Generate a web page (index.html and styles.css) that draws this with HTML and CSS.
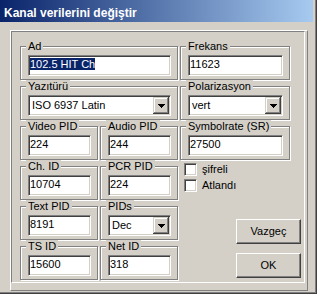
FILE: index.html
```html
<!DOCTYPE html>
<html lang="tr">
<head>
    <meta charset="UTF-8">
    <title>Kanal verilerini değiştir</title>
    <link rel="stylesheet" href="styles.css">
</head>
<body>
    <div class="window">
        <div class="titlebar">Kanal verilerini değiştir</div>
        <div class="frame">
            <div class="panel">
                <div class="grid">
                    <div class="group c12">
                        <span class="caption">Ad</span>
                        <div class="edit"><span class="sel">102.5 HIT Ch</span></div>
                    </div>
                    <div class="group c3">
                        <span class="caption">Frekans</span>
                        <div class="edit">11623</div>
                    </div>

                    <div class="group c12">
                        <span class="caption">Yazıtürü</span>
                        <div class="combo"><span class="value">ISO 6937 Latin</span><span class="drop"><svg width="7" height="4"><path d="M0 0h7v1h-1v1h-1v1h-1v1h-1v-1h-1v-1h-1v-1h-1z"/></svg></span></div>
                    </div>
                    <div class="group c3">
                        <span class="caption">Polarizasyon</span>
                        <div class="combo"><span class="value">vert</span><span class="drop"><svg width="7" height="4"><path d="M0 0h7v1h-1v1h-1v1h-1v1h-1v-1h-1v-1h-1v-1h-1z"/></svg></span></div>
                    </div>

                    <div class="group c1">
                        <span class="caption">Video PID</span>
                        <div class="edit">224</div>
                    </div>
                    <div class="group c2">
                        <span class="caption">Audio PID</span>
                        <div class="edit">244</div>
                    </div>
                    <div class="group c3">
                        <span class="caption">Symbolrate (SR)</span>
                        <div class="edit">27500</div>
                    </div>

                    <div class="side">
                        <label class="check"><span class="box"></span>şifreli</label>
                        <label class="check"><span class="box"></span>Atlandı</label>
                        <div class="buttons">
                            <div class="btn">Vazgeç</div>
                            <div class="btn">OK</div>
                        </div>
                    </div>

                    <div class="group c1">
                        <span class="caption">Ch. ID</span>
                        <div class="edit">10704</div>
                    </div>
                    <div class="group c2">
                        <span class="caption">PCR PID</span>
                        <div class="edit">224</div>
                    </div>

                    <div class="group c1">
                        <span class="caption">Text PID</span>
                        <div class="edit">8191</div>
                    </div>
                    <div class="group c2">
                        <span class="caption">PIDs</span>
                        <div class="combo"><span class="value">Dec</span><span class="drop"><svg width="7" height="4"><path d="M0 0h7v1h-1v1h-1v1h-1v1h-1v-1h-1v-1h-1v-1h-1z"/></svg></span></div>
                    </div>

                    <div class="group c1">
                        <span class="caption">TS ID</span>
                        <div class="edit">15600</div>
                    </div>
                    <div class="group c2">
                        <span class="caption">Net ID</span>
                        <div class="edit">318</div>
                    </div>
                </div>
            </div>
        </div>
    </div>
</body>
</html>
```

FILE: styles.css
```css
* {
    box-sizing: border-box;
    margin: 0;
    padding: 0;
}

body {
    font-family: "Liberation Sans", Arial, sans-serif;
    font-size: 11px;
    color: #000;
    background: #D4D0C8;
}

.window {
    width: 317px;
    height: 294px;
    background: #D4D0C8;
    box-shadow: inset -1px -1px #404040, inset -2px -2px #808080;
}

.titlebar {
    width: 313px;
    height: 22px;
    padding: 4px 0 0 4px;
    line-height: 18px;
    font-size: 12px;
    font-weight: bold;
    color: #fff;
    white-space: nowrap;
    background: linear-gradient(to right, #0A246A, #A6CAF0);
}

/* raised outer frame + sunken panel inside it */
.frame {
    width: 298px;
    margin: 8px 0 0 10px;
    padding: 0 2px 7px 0;
    border: 1px solid;
    border-color: #fff #808080 #808080 #fff;
}

.panel {
    padding: 14px 3px 2px 8px;
    border: 1px solid;
    border-color: #808080 #fff #fff #808080;
}

.grid {
    display: grid;
    grid-template-columns: 78px 78px 110px 9px;
    grid-template-rows: repeat(6, 34px);
    column-gap: 2px;
    row-gap: 6px;
}

.c1 { grid-column: 1; }
.c2 { grid-column: 2; }
.c3 { grid-column: 3; }
.c12 { grid-column: 1 / 3; }

/* etched group box */
.group {
    border: 1px solid #808080;
    box-shadow: inset 1px 1px #fff, 1px 1px #fff;
    padding: 0 6px 0 7px;
}

.caption {
    display: block;
    width: fit-content;
    margin: -7px 0 0 -2px;
    padding: 0 2px;
    line-height: 13px;
    background: #D4D0C8;
    white-space: nowrap;
}

.edit,
.combo {
    height: 21px;
    margin-top: 2px;
    background: #fff;
    border: 1px solid;
    border-color: #808080 #fff #fff #808080;
    box-shadow: inset 1px 1px #404040, inset -1px -1px #D4D0C8;
    white-space: nowrap;
}

.edit {
    padding: 1px 1px 0 1px;
    line-height: 15px;
}

.sel {
    background: #0A246A;
    color: #fff;
}

.combo {
    display: flex;
    padding: 1px;
}

.combo .value {
    flex: 1;
    padding: 1px 0 0 2px;
    line-height: 15px;
}

.drop {
    width: 16px;
    height: 17px;
    display: flex;
    align-items: center;
    justify-content: center;
    background: #D4D0C8;
    box-shadow: inset -1px -1px #404040, inset 1px 1px #D4D0C8, inset -2px -2px #808080, inset 2px 2px #fff;
}

.drop svg {
    display: block;
}

.side {
    grid-column: 3 / 5;
    grid-row: 4 / 7;
    margin-top: -3px;
    padding-left: 4px;
    display: flex;
    flex-direction: column;
}

.check {
    display: flex;
    align-items: flex-start;
    height: 16px;
    line-height: 13px;
}

.box {
    width: 13px;
    height: 13px;
    margin-right: 5px;
    background: #fff;
    border: 1px solid;
    border-color: #808080 #fff #fff #808080;
    box-shadow: inset 1px 1px #404040, inset -1px -1px #D4D0C8;
}

.buttons {
    margin-top: auto;
    margin-bottom: 2px;
    align-self: flex-end;
    display: flex;
    flex-direction: column;
    gap: 9px;
}

.btn {
    width: 65px;
    height: 25px;
    line-height: 23px;
    text-align: center;
    background: #D4D0C8;
    border: 1px solid;
    border-color: #fff #404040 #404040 #fff;
    box-shadow: inset -1px -1px #808080;
}
```
